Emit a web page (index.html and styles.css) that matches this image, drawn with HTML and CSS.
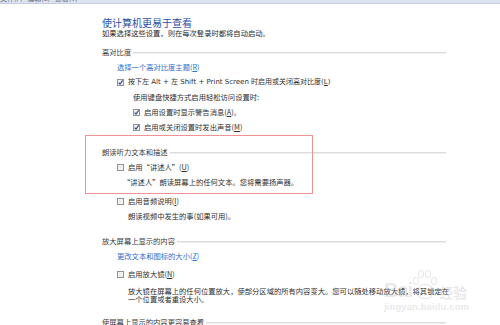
FILE: index.html
```html
<!DOCTYPE html>
<html lang="zh-CN">
<head>
<meta charset="utf-8">
<title>轻松访问中心</title>
<link rel="stylesheet" href="styles.css">
</head>
<body>
<div class="topbar"><div class="topbar-text">文件(F)&nbsp;&nbsp;&nbsp;编辑(E)&nbsp;&nbsp;&nbsp;查看(V)</div></div>
<main class="content">
  <h1 class="title">使计算机更易于查看</h1>
  <p class="sub">如果选择这些设置，则在每次登录时都将自动启动。</p>

  <section class="group g1">
    <div class="group-head"><span>高对比度</span><i class="rule"></i></div>
    <a class="row link ind1">选择一个高对比度主题(<u>R</u>)</a>
    <label class="row ind1"><span class="cb on"><svg viewBox="0 0 7 7" width="7" height="7"><path d="M1.6 3.6 L3 5.2 L5.6 1.4" fill="none" stroke="#27438a" stroke-width="1.1"/></svg></span><span class="lat">按下左 Alt + 左 Shift + Print Screen 时启用或关闭高对比度(<u>L</u>)</span></label>
    <p class="row ind2">使用键盘快捷方式启用轻松访问设置时:</p>
    <label class="row ind2"><span class="cb on"><svg viewBox="0 0 7 7" width="7" height="7"><path d="M1.6 3.6 L3 5.2 L5.6 1.4" fill="none" stroke="#27438a" stroke-width="1.1"/></svg></span>启用设置时显示警告消息(<u>A</u>)。</label>
    <label class="row ind2"><span class="cb on"><svg viewBox="0 0 7 7" width="7" height="7"><path d="M1.6 3.6 L3 5.2 L5.6 1.4" fill="none" stroke="#27438a" stroke-width="1.1"/></svg></span>启用或关闭设置时发出声音(<u>M</u>)</label>
  </section>

  <section class="group g2">
    <div class="group-head"><span>朗读听力文本和描述</span><i class="rule"></i></div>
    <label class="row ind1"><span class="cb"></span>启用“讲述人”(<u>U</u>)</label>
    <p class="row ind-q">“讲述人”朗读屏幕上的任何文本。您将需要扬声器。</p>
    <label class="row ind1 audio"><span class="cb"></span>启用音频说明(<u>I</u>)</label>
    <p class="row ind3">朗读视频中发生的事(如果可用)。</p>
  </section>

  <section class="group g3">
    <div class="group-head"><span>放大屏幕上显示的内容</span><i class="rule"></i></div>
    <a class="row link ind1">更改文本和图标的大小(<u>Z</u>)</a>
    <label class="row ind1 mag"><span class="cb"></span>启用放大镜(<u>N</u>)</label>
    <p class="para ind3">放大镜在屏幕上的任何位置放大，使部分区域的所有内容变大。您可以随处移动放大镜，将其锁定在<br>一个位置或者重设大小。</p>
  </section>

  <section class="group g4">
    <div class="group-head"><span>使屏幕上显示的内容更容易查看</span><i class="rule"></i></div>
  </section>
</main>

<div class="highlight"></div>
<div class="watermark">
  <div class="wm-top"><span class="wm-bai">Bai</span><span class="wm-paw"><i></i><i></i><i></i><i></i><b></b></span><span class="wm-jy">经验</span></div>
  <div class="wm-url">jingyan.baidu.com</div>
</div>
</body>
</html>
```

FILE: styles.css
```css
* { box-sizing: border-box; }

html, body {
  margin: 0;
  padding: 0;
  background: #ffffff;
  width: 500px;
  height: 325px;
  overflow: hidden;
}

body {
  font-family: "Noto Sans CJK SC", "Noto Sans", sans-serif;
  font-size: 7.3px;
  color: #2f2f2f;
  position: relative;
}

.topbar {
  height: 4px;
  background: #dde3f1;
  border-bottom: 1px solid #c6cde0;
  overflow: hidden;
}

.topbar-text {
  margin-top: -6px;
  line-height: 8px;
  font-size: 7px;
  color: #6a6e78;
  white-space: nowrap;
}

.content {
  padding: 13px 0 0 102px;
}

.title {
  margin: 0;
  font-size: 10px;
  line-height: 11px;
  font-weight: normal;
  color: #1f4fa6;
  white-space: nowrap;
}

.sub {
  margin: 0;
  line-height: 10px;
  white-space: nowrap;
  color: #2a2a2a;
}

.group { margin: 0; }
.g1 { margin-top: 7px; }
.g2 { margin-top: 10px; }
.g3 { margin-top: 9.5px; }
.g4 { margin-top: 11px; }

.group-head {
  display: flex;
  align-items: center;
  gap: 2px;
  width: 344px;
  height: 15px;
  line-height: 15px;
  color: #3a3a3a;
  white-space: nowrap;
}

.rule {
  flex: 1;
  height: 2px;
  margin-top: 1px;
  background: linear-gradient(#dcdcdc 0 50%, #efefef 50% 100%);
}

.row {
  display: flex;
  align-items: center;
  height: 15px;
  line-height: 15px;
  margin: 0;
  white-space: nowrap;
}

.link {
  color: #2f6fcf;
  text-decoration: none;
}

u { text-decoration: underline; text-underline-offset: 1px; }

.ind1 { margin-left: 15px; }
.ind2 { margin-left: 31px; }
.ind3 { margin-left: 26px; }
.ind-q { margin-left: 21px; }

.audio { margin-top: 4px; }
.mag { margin-top: 3px; }

.para {
  margin-top: 5px;
  margin-bottom: 0;
  line-height: 8.6px;
  white-space: nowrap;
}

.cb {
  flex: none;
  display: inline-flex;
  align-items: center;
  justify-content: center;
  width: 7px;
  height: 7px;
  margin-right: 4px;
  border: 1px solid #909294;
  background: linear-gradient(135deg, #e2e2e2, #f8f8f8);
  box-shadow: inset 0 0 0 1px #f4f4f4;
}

.cb.on {
  background: linear-gradient(135deg, #dfe3ea, #f6f7f9);
}

.cb svg {
  display: block;
  margin: -1px;
}

.lat {
  font-family: "DejaVu Sans", "Noto Sans CJK SC", sans-serif;
  font-size: 7px;
}

.highlight {
  position: absolute;
  left: 85px;
  top: 135px;
  width: 228px;
  height: 59px;
  border: 1px solid #f19393;
  pointer-events: none;
}

.watermark {
  position: absolute;
  left: 384px;
  top: 266px;
  width: 90px;
  color: rgba(190, 190, 190, 0.35);
  pointer-events: none;
  font-family: "Liberation Sans", "Noto Sans CJK SC", sans-serif;
}

.wm-top {
  display: flex;
  align-items: flex-end;
  height: 34px;
}

.wm-bai {
  font-size: 20px;
  font-weight: bold;
  line-height: 20px;
  letter-spacing: -1px;
}

.wm-paw {
  position: relative;
  width: 24px;
  height: 32px;
  margin: 0 2px 0 1px;
}

.wm-paw i {
  position: absolute;
  width: 6px;
  height: 8px;
  border-radius: 50%;
  border: 1.5px solid rgba(190, 190, 190, 0.4);
}
.wm-paw i:nth-child(1) { left: 0; top: 9px; }
.wm-paw i:nth-child(2) { left: 5px; top: 2px; }
.wm-paw i:nth-child(3) { left: 12px; top: 2px; }
.wm-paw i:nth-child(4) { left: 18px; top: 9px; }
.wm-paw b {
  position: absolute;
  left: 4px;
  top: 16px;
  width: 16px;
  height: 15px;
  border-radius: 45% 45% 40% 40%;
  border: 1.5px solid rgba(190, 190, 190, 0.4);
}

.wm-jy {
  font-family: "Noto Sans CJK SC", sans-serif;
  font-size: 14px;
  line-height: 16px;
  font-weight: bold;
}

.wm-url {
  margin-top: 2px;
  font-size: 9.5px;
  font-weight: bold;
  line-height: 10px;
  letter-spacing: 0.1px;
}
```
